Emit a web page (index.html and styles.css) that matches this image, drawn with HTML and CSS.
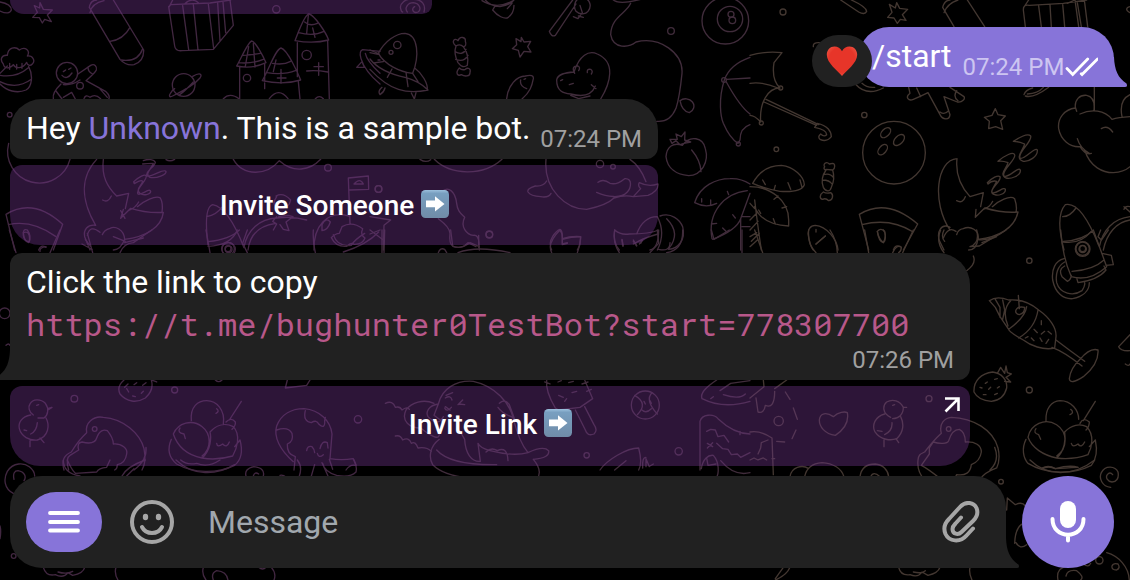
FILE: index.html
```html
<!DOCTYPE html>
<html lang="en">
<head>
<meta charset="utf-8">
<title>Chat</title>
<link rel="stylesheet" href="styles.css">
</head>
<body>
<svg class="wallpaper" viewBox="0 0 1130 580" aria-hidden="true">
  <g class="doodle left" transform="scale(.33333)">
    <path d="M0 6Q34 12 34 30Q28 46 0 33M120 8L130 28 157 30 142 45 154 65 134 58 127 69 118 53 98 52 112 37 103 17 119 24Z"/>
    <path d="M268 22Q272 0 290 0M268 22L360 178Q378 198 402 194Q432 184 431 150L340 0M270 38Q275 10 312 2M330 124Q370 119 390 82M362 180Q414 188 428 146"/>
    <path d="M506 20L524 138Q526 154 546 152L640 148L700 76L690 0M506 20L512 14 630 9 692 0M548 17L566 150M580 14L594 150M625 12L641 146M653 8L660 122M669 6L677 98M518 0L508 20M556 10Q575-8 595 8"/>
    <circle cx="829" cy="28" r="11"/><circle cx="29" cy="344" r="7"/>
    <path d="M10 192C-2 178 6 164 22 166C24 142 46 138 58 150C76 138 92 152 82 168C100 166 106 184 97 192C90 200 82 195 80 187C68 208 46 206 40 194C30 208 12 206 10 192M29 190V208M50 193V207M66 190V205M0 220L22 198M86 200C100 226 96 260 78 270C50 282 20 272 0 252M0 245Q50 270 94 238M0 226Q50 234 84 204"/>
    <circle cx="201" cy="219" r="32"/><path d="M186 226Q200 242 216 219M190 215l7-5M206 208l7-4M234 222L272 196C284 190 292 200 289 210Q286 218 258 242L318 275Q332 288 326 298M183 252Q156 278 160 296M168 273L186 297M190 254Q216 256 240 240M190 292L215 277 226 297M252 296Q256 282 270 292Q285 280 302 296M264 201Q264 216 278 222M296 262L322 292"/><circle cx="240" cy="257" r="10"/>
    <circle cx="551" cy="255" r="34"/><path d="M578 229C600 216 608 222 600 234Q580 258 518 288C506 294 508 286 510 282Q514 272 524 266M539 284Q552 276 580 246"/>
    <path d="M710 198C724 174 744 126 755 123C766 124 790 170 798 188Q755 208 710 198M728 166Q760 164 780 160M716 188Q755 192 790 178M746 140L736 199M760 130L765 201M719 200V297M794 190V244M794 249V266M787 242C806 210 826 148 843 144C862 148 894 220 902 240Q850 256 787 242M818 190Q850 196 872 184M801 218Q850 226 888 211M843 208V250M828 180L820 215M895 245L900 297M885 122C896 94 914 42 927 42C944 46 978 98 986 120Q940 132 885 122M914 66Q930 80 952 70M896 98Q940 110 972 94M925 46L920 100M938 84L945 112M892 128V230M983 123L988 297M920 213Q950 210 983 216M956 188V226M942 200H970M832 234H858"/>
    <circle cx="741" cy="234" r="11"/><circle cx="920" cy="165" r="14"/><path d="M670 296Q690 276 718 297M808 296Q836 260 864 296M946 296Q958 284 970 296"/>
    <path d="M1140 154L1088 149Q1076 154 1083 176Q1095 215 1140 252M1070 202L1086 185 1093 202ZM1096 160Q1100 182 1140 220M1140 180H1134"/>
    <path d="M26 430A94 94 0 1 0 210 478M290 478C230 542 254 620 287 676M310 478C304 530 322 560 350 588L386 580L376 626M308 600Q324 610 334 588M370 628L362 655 392 625Q440 640 490 637C484 684 436 710 374 718C372 686 344 678 330 685Q312 690 307 704M362 632L375 655M412 620C430 604 468 584 481 594Q490 610 486 637M388 630Q406 624 416 606M287 676C262 672 250 690 254 710L270 750M262 706Q270 672 300 697M246 732L276 748M374 718Q362 750 340 750M430 714L374 728"/>
    <path d="M401 545C418 530 434 522 438 527C446 538 404 568 414 582C424 588 448 562 452 574C452 584 430 588 420 580C406 567 424 558 428 544Q424 538 403 551ZM430 482C446 476 462 478 466 487C464 500 432 518 442 528C456 532 492 504 498 514C500 524 470 536 450 532C432 522 454 508 460 490Q440 490 428 492M498 479Q510 486 524 478"/>
    <path d="M18 643Q100 592 188 673L160 750M18 643L44 750M25 674Q96 658 168 710M70 706Q68 684 82 690Q96 710 86 728Q74 724 70 706M116 750Q122 732 138 742"/>
    <path d="M700 478C730 530 800 528 838 482C880 520 930 512 962 478"/><circle cx="984" cy="503" r="10"/>
    <path d="M638 614Q610 622 624 735M638 614C670 620 700 660 732 743M620 650Q650 644 665 622M624 739Q694 736 712 690M732 743C740 690 780 656 830 654Q880 648 920 660M744 750C750 700 780 676 828 670M828 588Q850 576 872 600Q868 626 836 626Q812 616 830 590M830 650L818 664 830 672 820 690M836 650L864 646 879 650 858 666 867 692 850 688 840 674"/>
    <circle cx="686" cy="748" r="20"/><circle cx="686" cy="748" r="10"/>
    <path d="M1050 670L1045 534L1105 528L1106 568L1049 570M1062 552Q1080 532 1090 552ZM1046 648C980 630 940 680 942 750M966 674Q978 650 991 666Q984 690 966 692ZM994 713Q1006 700 1018 700L1026 680Q1056 662 1088 686Q1080 704 1095 714Q1088 734 1062 733Q1054 726 1040 739Q1008 742 994 713"/><circle cx="1136" cy="567" r="10"/>
  </g>
  <g class="doodle middle" transform="translate(370) scale(.33333)">
    <path d="M162 36C168 14 156-2 130-2C106-6 88 12 92 26Q94 36 98 36M112 36C102 24 114 8 130 8C148 10 156 28 144 36C130 42 122 26 134 20M336 2Q380 30 430 2M346 0Q360 18 390 20Q424 14 432 0M368 30C384 50 402 56 412 54C428 44 432 30 432 16M368 30L374 20M426 10L412 26"/>
    <path d="M608 0L538 94Q544 112 556 106L618 12M634-8C612 -2 610 22 618 34C630 46 648 42 654 34C666 20 660 2 648-4M630 16L637 38 624 56 610 50M625 48L640 52"/>
    <path d="M728-2Q744 16 812-2M782 10C770 40 724 50 722 104C730 150 778 142 798 126C870 108 940 160 936 220C932 260 926 300 918 325Q900 368 860 364M930 302A25 22 0 1 1 958 338Q936 334 930 302"/>
    <circle cx="903" cy="93" r="10"/><circle cx="1066" cy="62" r="70"/><circle cx="1080" cy="57" r="38"/><circle cx="1083" cy="43" r="9"/><circle cx="1087" cy="61" r="10"/>
    <path d="M25 160C44 124 78 100 105 100C146 104 148 170 128 220C90 216 44 194 25 160M0 177Q30 216 108 233Q148 244 174 270C110 284 60 272 0 208M0 150L28 162M0 158L28 164M10 189L40 185M66 207L52 232M108 217L114 260M128 220L144 245M134 204C156 220 174 250 172 270M36 262Q22 274 30 284Q42 276 45 264M124 279L133 297 138 278"/><circle cx="82" cy="135" r="11"/><circle cx="63" cy="157" r="6"/>
    <path d="M258 138C242 124 254 112 264 122C270 106 288 112 286 124C290 134 286 140 280 140Q298 164 292 196Q278 207 264 188Q250 160 258 138ZM258 138Q270 130 280 140M255 155Q278 168 288 148M257 178Q282 188 294 166M268 204C254 220 264 230 274 224C284 230 300 230 300 218C304 204 292 202 286 208Q276 212 268 204Z"/>
    <path d="M454 112L462 126 482 124 473 140 483 156 462 154 450 171 445 151 427 146 440 134 438 116 453 125ZM410 296C414 256 440 228 466 228Q492 222 490 236C486 258 480 276 456 297M452 240Q448 258 470 266M462 238l5-2"/>
    <path d="M612 216C628 166 656 150 682 162C738 186 722 248 692 297M612 216C586 218 562 222 560 240C560 274 580 280 602 282Q660 298 676 258M664 254L678 266M614 220Q602 198 624 198Q632 202 626 212M652 218Q650 206 662 208Q670 214 664 222M572 242l6-3M598 254l12-4M602 286L626 296 660 288"/>
    <path d="M1140 172C1100 186 1074 208 1063 240C1044 300 1052 350 1060 370Q1080 416 1104 430L1110 420Q1110 384 1140 374M1069 238L1140 234M1069 246Q1110 320 1140 342"/><circle cx="1062" cy="240" r="7"/><circle cx="1105" cy="432" r="6"/>
    <path d="M888 470C890 440 910 426 937 436C960 404 1000 412 1006 446C1018 486 994 526 956 527C920 524 892 506 888 470M965 450Q992 482 993 515M900 418L922 418 918 402 934 410 945 396 944 420 962 426 942 430 930 434 918 422 906 430Z"/>
    <path d="M150 478Q168 490 182 479M193 478C240 526 340 530 396 478M528 478C520 570 590 628 650 628C690 620 720 606 732 594Q764 584 790 590L834 586Q866 574 864 552Q836 562 808 548Q802 558 812 566L790 590M828 545Q810 498 780 478M530 543Q520 560 496 558Q470 566 474 576Q482 588 512 590Q536 594 543 580M684 547Q700 535 720 550Q740 556 764 536C790 534 782 566 772 576C752 598 710 590 680 577"/>
    <circle cx="690" cy="492" r="11"/><circle cx="729" cy="500" r="7"/><circle cx="25" cy="567" r="10"/><circle cx="358" cy="703" r="10"/><path d="M215 575C236 556 256 576 260 610C262 632 272 640 284 652C270 680 290 704 310 706Q326 704 327 730L328 750M205 656Q240 682 240 700Q236 732 250 740C274 746 284 738 294 728L318 740M0 650L62 660 42 676 40 750M0 690L40 720"/>
    <path d="M545 750C530 720 560 692 570 688Q578 690 577 716Q602 708 632 710Q632 732 622 750M577 716V732L592 728M734 690Q728 728 748 750M734 690Q752 706 778 702Q840 702 866 690Q866 744 840 750M756 718L760 738M790 724L800 738M818 718L812 730M800 702C812 670 830 650 862 650Q888 700 862 750M870 648C904 636 930 660 938 680C948 720 924 746 896 748M890 656Q934 700 896 746M974 608C990 556 1040 536 1080 536Q1112 534 1140 552M974 608Q1008 626 1040 610M1026 716C1012 640 1060 580 1132 572M1028 718Q1100 690 1112 656L1140 580M995 596V606M1022 600V614M1072 574L1076 584M1024 672L1040 670M1058 684L1068 694M1088 644L1096 654M1112 656V750M1118 650H1140M1116 680H1140"/>
  </g>
  <g class="doodle right" transform="translate(750) scale(.33333)">
    <circle cx="99" cy="36" r="9"/><circle cx="343" cy="345" r="8"/><circle cx="79" cy="448" r="7"/><circle cx="92" cy="264" r="6"/><circle cx="34" cy="369" r="6"/>
    <path d="M272 0L326 36Q344 46 350 34Q348 20 304 0M440 8L449 25 473 28 457 44 468 61 451 58 442 70 432 54 413 52 426 37 418 13 436 24ZM578 22Q584 0 600 0M578 22L612 80M704 80L652 0M582 38Q592 10 624 0M820 30L826 80M820 30Q820 12 838 16L940 10 1010 0M820 24L836 0M866 18L874 80M900 14L904 80M938 12L944 80M952 10L975 0 986 80M982 8L994 80M1003 0L1013 80M1140 20Q1120 26 1140 38"/>
    <path d="M0 166Q50 152 96 158L72 188Q64 240 90 264C52 264 28 310 32 366Q14 346 0 346M0 250Q36 244 84 264M42 306L200 376M48 298L206 374M194 382L202 370C232 376 244 394 244 410Q230 428 210 418Q202 410 212 402Q222 412 230 404C230 392 214 386 194 382M190 140Q188 126 210 128M316 252Q350 290 400 264M336 250Q350 264 374 262"/>
    <path d="M476 262L480 280C464 292 476 304 490 298Q510 290 534 278L570 344C578 360 598 362 600 344L582 290 622 306C638 308 646 296 642 290L600 262M500 264L512 290M620 272Q608 290 624 302M570 336Q584 346 596 332M822 284Q826 270 848 264M826 288Q850 296 896 262M832 282Q864 280 880 262"/>
    <path d="M736 326L744 344 766 348 752 362 758 388 737 380 716 386 718 364 703 352 726 346ZM976 322C974 300 988 284 1010 286C1030 290 1034 310 1032 330M980 334L976 322M1033 262V330M990 342C1024 326 1064 330 1086 358Q1104 352 1140 350M1054 386Q1072 374 1088 396M976 324C944 328 922 354 926 386C932 420 960 442 990 440Q1006 466 1024 460M982 416Q990 444 1018 460M1004 450C1020 502 1060 518 1090 518Q1122 516 1140 500M1116 350Q1106 300 1140 284"/>
    <circle cx="432" cy="458" r="94"/><ellipse cx="407" cy="398" rx="18" ry="11" transform="rotate(-45 407 398)"/><ellipse cx="447" cy="420" rx="20" ry="12" transform="rotate(-45 447 420)"/><ellipse cx="398" cy="449" rx="18" ry="11" transform="rotate(-50 398 449)"/>
    <path d="M238 492C228 482 218 494 224 500C220 504 222 510 228 510Q210 536 220 562C228 576 240 576 244 562Q256 536 248 510C256 506 256 490 248 490ZM228 508L248 510M220 524Q240 518 250 532M218 540Q238 540 246 552M220 576C208 584 208 596 218 598C226 594 230 596 236 602C248 602 252 584 242 578Q230 582 220 576"/>
    <path d="M8 550C30 510 60 496 94 496C132 500 162 530 163 554Q154 578 90 574Q50 568 8 550M0 560C60 560 116 600 116 660V678C70 676 30 660 14 620M38 540l8 14M76 556l-4 14M114 548l8 20M150 540l6 22M84 588l-12 10M110 620l-14 4M70 656l6 16M26 630l6 10M14 600Q22 670 34 750M0 610L14 626M0 660L20 640M0 690L24 664M4 724L28 700"/>
    <path d="M621 476C560 480 544 606 600 690M621 476Q614 540 660 590L700 578L692 620M620 602Q638 612 646 590M678 628L676 652 704 624Q760 640 804 636C794 684 746 712 684 718C690 690 660 676 640 686Q624 688 620 704M727 620C744 604 780 584 794 596Q802 620 798 636M700 628Q720 622 728 604M600 682C574 668 560 696 568 722L582 750M580 714Q594 678 618 694M684 716Q680 750 656 750M740 710L696 728"/>
    <path d="M712 548C726 534 744 524 750 530C756 542 720 566 726 578C738 584 762 558 766 568C768 582 744 588 734 584C714 578 734 560 740 544Q726 540 714 552ZM744 484C764 466 790 454 794 464C800 478 752 512 762 528C776 536 804 498 811 510C814 528 780 538 768 534C746 522 770 506 774 488Q758 482 744 484ZM790 424C808 412 834 398 842 408C848 424 802 458 810 474C820 484 856 438 862 450C864 470 836 486 820 484C792 474 820 452 824 432Q806 424 790 424Z"/>
    <path d="M328 643Q410 592 503 672L460 750M328 643L356 750M336 674Q420 652 490 696M382 694Q392 682 404 694Q410 720 400 728Q386 716 382 694M430 750Q436 732 452 740M176 712C170 688 182 676 196 676C230 678 262 720 264 750M176 712Q180 738 190 750M198 688V696M198 732L226 708M946 614C922 640 926 690 942 750M946 614C980 606 1012 650 1046 736M938 650Q960 650 978 624M940 724Q1000 720 1028 692M1048 740C1058 690 1090 656 1140 650M1060 750C1070 700 1100 666 1140 660M1122 620L1140 636M1140 620Q1126 616 1122 628"/><circle cx="998" cy="746" r="20"/><circle cx="998" cy="746" r="9"/>
  </g>
  <g class="doodle left" transform="translate(0 230) scale(.33333)">
    <circle cx="14" cy="250" r="16"/><circle cx="223" cy="506" r="10"/><circle cx="524" cy="480" r="9"/><circle cx="1074" cy="568" r="11"/><path d="M18 346Q26 338 30 346M28 0L48 68M180 0L150 68M120 64Q118 52 138 50M262 10L278 68M256 28L272 50M340 20L376 34M360 68Q372 40 400 38L455 0M70 8Q92 0 88 34Q72 38 70 8M618 0L630 68M742 0L728 40 742 68M624 35Q690 28 718 0M940 0Q938 36 946 68M1000 14Q1012 52 1054 46Q1062 30 1094 10M1030 66Q1100 44 1136 6"/>
    <circle cx="684" cy="56" r="19"/><circle cx="684" cy="56" r="9"/><circle cx="284" cy="597" r="7"/>
    <path d="M372 450C356 464 354 480 360 492C380 516 410 520 436 504C454 488 460 470 454 450M374 472l10-10M402 464l8-6M428 466l10-8M386 486l-6-10M398 498l8 2M424 490l6-6M454 450L470 456M646 450Q656 460 666 450M862 450L856 474 920 466 930 450"/>
    <path d="M100 555C86 546 84 530 90 522C98 506 122 506 136 520C148 536 144 556 132 564L114 564M144 535L156 532 144 540M92 555C64 560 54 580 58 596C64 620 88 632 112 630C146 620 150 586 138 564M112 578Q110 604 92 612M72 600l8 2M90 632V650M120 624L132 638M110 526l6-2"/>
    <path d="M192 720C184 690 192 676 214 666Q234 632 260 608C254 580 280 556 310 562C370 566 420 610 432 656Q440 696 426 720M206 720Q196 684 210 676L236 660Q230 638 246 636C270 642 286 638 290 624C298 600 312 598 322 602Q340 624 340 642C366 640 384 656 380 672Q376 700 352 704Q352 716 344 720M438 652Q442 690 402 720"/>
    <path d="M574 572C570 530 594 512 620 512C650 512 676 540 670 582M520 612A56 56 0 1 1 606 678M520 612C534 654 566 676 606 684C634 660 634 620 630 606C650 584 676 578 700 590C724 616 710 656 698 678Q650 692 606 684M514 628C500 660 508 684 530 702C580 730 650 732 704 706C728 686 728 660 720 630L704 650M540 594Q530 608 552 612L556 626M650 640Q652 654 668 642Q680 656 688 636M648 550Q660 544 650 536M688 570L724 514M678 576Q694 560 706 576Q708 586 696 598"/>
    <path d="M880 695C840 660 820 620 830 588C844 552 876 536 912 536C960 540 992 574 996 612L990 686Q1024 692 1060 686L1068 706Q1050 702 1038 720M830 600Q864 588 876 610Q882 634 862 642Q860 672 886 680L882 720M916 542Q908 574 934 578Q950 568 956 582Q976 600 974 572L976 562M920 662Q922 646 936 650Q944 658 944 668M960 656Q966 630 982 638L984 654M952 670Q956 686 970 674M988 688L998 718"/>
  </g>
  <g class="doodle middle" transform="translate(370 230) scale(.33333)">
    <circle cx="358" cy="14" r="10"/><circle cx="826" cy="525" r="42"/><circle cx="650" cy="676" r="8"/><circle cx="926" cy="664" r="11"/>
    <path d="M0 12L30 0M36 0V68M44 0L42 68M242 0L248 48Q270 60 300 38L328 50M326 16V52M205 68Q210 52 224 58L230 68M264 68Q320 46 420 68M545 68Q530 40 570 0Q578 10 577 28Q602 20 632 20Q632 44 622 68M577 28V44L592 40M734 0Q728 38 748 68M840 68L866 40 862 0M756 30L758 48M790 30L800 46M818 30L808 42M790 42Q820 24 864 12M866 58Q900 66 900 38M890 68Q940 60 938 0M1024 0L1032 28 1078 0M1116 0V68"/>
    <path d="M205 522C216 476 258 450 310 454C376 468 420 520 430 566Q448 638 474 668Q520 646 536 662Q540 684 490 688M490 688Q520 724 500 748M474 668Q430 680 360 662Q330 654 324 640L331 694C304 696 286 670 284 628L268 600M205 522C176 526 166 546 174 560Q204 592 220 560M205 522L192 556 216 574M192 520C160 506 124 518 108 540C92 574 120 594 152 594Q210 640 208 610M46 520Q68 510 76 532Q90 528 96 540 112 528 118 538M76 618Q92 614 98 630 116 620 124 640 136 632 144 654Q170 650 184 664M208 628C178 650 176 684 188 704Q220 736 296 744M200 660Q240 706 380 704M228 496l20-8M226 504Q242 494 246 510M266 522l18 2M278 510l-14 14M224 534Q230 548 244 532M226 530L240 540M388 520Q404 504 418 524L434 568M384 532Q396 550 428 562M348 666Q364 650 382 662Q412 648 414 692"/>
    <path d="M530 450Q526 484 556 534L566 540 630 532 668 506 644 450M524 456L540 462M636 462L654 456M564 456l10-4M596 458l14-4M650 484L664 478M566 496l14 6M606 488l14-4M584 514l6-8M616 540L646 600Q652 620 672 612Q684 600 672 584L644 530M794 496Q836 520 802 554M846 488Q824 510 862 552M822 514l4 8M840 512l4 8M816 540Q828 552 844 536"/>
    <path d="M1040 450C1004 474 990 490 996 506Q1060 538 1140 514M1060 494Q1108 510 1126 492M1050 482L1082 460 1140 452M1022 506l8-6M990 720V574C996 552 1030 550 1044 566Q1090 610 1140 612M1110 604V614M1010 604L1022 598 1036 600 1044 620 1062 616 1076 636M1012 640L1028 650M1028 638L1012 654M1040 640L1058 656 1074 658 1084 674 1102 672 1112 682 1140 668M994 716C998 688 1014 674 1030 676C1048 696 1048 730 1038 746M1010 684L1014 706 1038 702M1052 692Q1092 740 1140 728M690 720C710 690 770 654 806 654Q818 700 806 720M734 720L768 692M828 710V686L838 710M828 682Q816 682 818 714M840 708L850 702"/>
  </g>
  <g class="doodle right" transform="translate(750 230) scale(.33333)">
    <circle cx="838" cy="92" r="8"/><circle cx="838" cy="480" r="9"/><circle cx="537" cy="506" r="9"/><circle cx="86" cy="573" r="14"/><circle cx="596" cy="597" r="7"/><circle cx="998" cy="57" r="22"/><circle cx="998" cy="57" r="11"/>
    <path d="M176 0Q172 42 198 68M198 42L226 18M262 68Q260 30 240 0M344 0L356 68M490 0L458 68M382 4Q386 34 400 38Q412 14 400 0M428 68Q440 42 454 52Q454 64 446 68M14 0L38 68M0 20L20 8M0 50L22 30M572 0Q556 34 582 68M680 0Q690 40 660 50M582 0Q572 20 584 34M682 28Q720 36 768 0M660 50L688 48 730 22M670 78Q680 100 650 122"/>
    <path d="M932 0Q938 84 964 140Q1018 156 1070 110L1030 0M940 36Q990 44 1024 4M966 124Q1030 120 1062 90M980 144L984 158Q1044 150 1068 120L1062 108M1056 70L1084 76 1090 104 1068 106M942 86C916 92 904 118 908 150C916 190 940 208 968 206C996 200 1018 184 1018 158M944 96C922 108 916 134 920 158C930 192 970 200 996 182Q1006 166 1004 158M944 108Q924 118 936 140L952 154Q962 150 964 136M1052 0L1044 20 1054 30 1075 0"/>
    <path d="M718 212Q740 196 776 210Q826 206 866 240C900 264 920 294 918 320L914 354C880 362 840 346 820 330Q776 306 776 298L750 260 736 232ZM736 208L750 232 750 262M758 210L764 240 758 268M782 212Q754 240 774 288M830 230Q826 262 776 298M864 240Q856 294 806 324M805 196L808 236M798 240Q802 228 824 232Q824 250 808 254Q794 250 798 240M918 330Q960 362 1004 394M906 352Q944 366 996 408M990 388Q1020 352 1044 360C1046 388 1030 416 1000 440Q960 466 958 446Q962 414 990 388M874 272V284M894 304L904 312M852 298L862 308M870 324L876 334M896 328L888 340M844 324l8 8M874 312l10-8M826 324l8-4"/>
    <path d="M672 486C670 452 694 430 728 426C756 430 772 450 770 474C764 498 746 512 724 514C696 512 680 502 672 486M742 430L752 412 764 430 768 408 772 428 784 432 768 442 782 456 764 454M706 460l6-4M734 448l8-2M690 472l6 2M716 478l6-6M742 474l6-4M700 494l8 0M734 494l8-4M1140 314L1106 350Q1112 364 1140 362M1126 402Q1136 410 1140 402"/>
    <path d="M888 572C886 536 904 514 930 512C964 512 986 540 986 568M834 622A56 56 0 1 1 920 678M834 622C846 654 880 676 920 684C944 662 948 628 944 606C964 584 990 580 1010 590C1034 614 1026 652 1014 674Q970 690 920 684M828 628C814 656 820 684 834 700C890 734 970 734 1024 706C1042 684 1042 658 1036 630L1018 650M858 596Q848 608 866 614L872 628M964 640Q968 654 984 642Q994 656 1004 636M960 554Q974 548 962 538M1000 572L1036 514M990 580Q1000 560 1018 576Q1018 590 1008 600M876 714Q896 704 916 716Q942 714 984 712"/>
    <path d="M504 690C506 672 512 672 524 666Q550 632 574 610C566 580 584 564 604 562C670 564 730 600 744 654Q752 688 740 714Q698 730 690 750M576 750Q534 716 514 706L538 672V654L550 636C568 642 592 642 596 632C604 606 618 598 628 598Q646 606 646 636C676 634 694 646 694 666Q690 694 664 704Q660 740 620 734L612 750M504 690Q500 724 524 750M734 652Q750 692 720 720M40 450L42 470 0 504M110 450L74 476M18 504L24 546Q42 552 46 526Q74 538 74 484M106 486L120 508M130 534L142 568M138 600L126 626M104 636L80 634M208 570C210 548 230 546 250 560C266 546 284 544 292 548C298 580 280 600 256 616C224 612 208 590 208 570M422 562C396 550 398 526 410 516C428 506 450 512 460 532C460 554 446 566 428 566M460 532L470 532M404 552C374 560 366 586 374 604C392 632 424 632 440 626C462 606 462 580 452 560M426 578Q428 602 404 614M382 602l14 2M402 630V650M438 626L446 638M428 526l6-2M0 606Q30 600 66 624L70 734M54 630L34 638 32 654 24 672M0 690L12 684 24 690 40 684 50 690M66 686H74M120 740C124 712 156 702 176 716M164 740C170 710 190 700 216 698C250 700 274 716 282 740M330 740C334 710 354 702 376 702C398 704 414 720 416 740M362 740Q370 722 390 740"/>
  </g>
  <g class="doodle left" transform="translate(0 460) scale(.33333)">
    <path d="M40 100C12 86 10 56 22 34C40 6 72 8 88 20Q104 32 104 48M42 58C38 40 44 32 54 32C74 36 80 50 72 62M190 0Q190 40 240 48M202 0Q214 28 226 40L290 36Q296 24 320 22L330 0M366 48Q380 20 436 0M380 48L402 26M528 0C580 50 650 46 704 14M542 0Q560 16 590 10Q624 24 660 0M738 48Q732 26 762 20Q796 24 790 48M760 48Q764 34 776 42M840 46Q850 44 858 52M892 0Q908 20 898 48M934 48L944 14M968 10Q974 36 1010 46Q1050 54 1068 36Q1072 18 1062 0M984 48L966 8M0 198Q4 214 0 236M130 322Q138 350 166 344Q190 356 204 338L218 346Q250 340 254 322M174 336Q200 344 218 334M348 322Q342 340 354 360M610 322Q604 342 618 360M640 360Q632 340 650 332Q680 334 684 360M776 322Q788 332 798 322M814 322Q830 340 822 360"/><circle cx="41" cy="288" r="7"/>
  </g>
  <g class="doodle right" transform="translate(750 460) scale(.33333)">
    <circle cx="753" cy="65" r="7"/><circle cx="1048" cy="301" r="11"/><path d="M840 0C890 50 970 50 1034 0M876 26Q896 16 916 26Q960 14 984 22M1082 82C1056 80 1046 54 1054 38C1066 14 1096 18 1104 36C1108 56 1098 66 1086 66C1072 64 1066 52 1072 44Q1080 34 1088 44M770 150L772 114 796 134Q816 124 826 138M794 250Q796 200 820 190M798 248Q810 270 830 254M446 322Q452 348 480 344Q504 354 516 336L534 346Q564 340 570 322M490 336Q516 342 526 332M660 322Q656 340 666 360M120 322Q110 346 76 360M100 322L76 356M924 360Q916 320 960 318M948 348Q952 328 980 332Q1004 350 992 360M1070 278C1106 288 1136 320 1138 360M1086 318Q1090 308 1104 312Q1112 324 1100 330Q1084 330 1086 318M1000 312Q1016 324 1022 310"/>
  </g>
</svg>

<main class="chat">
  <div class="keyboard keyboard-previous"></div>

  <div class="row outgoing-row">
    <span class="reaction">
      <svg width="32" height="32" viewBox="0 0 32 32">
        <defs><radialGradient id="heart" cx=".5" cy=".45" r=".65"><stop offset=".65" stop-color="#e73529"/><stop offset="1" stop-color="#f05b48"/></radialGradient></defs>
        <path d="M16 31C12 26 .8 18 .8 9.700C.8 4.700 4.300 1.400 8.500 1.400c3.300 0 6.100 1.900 7.500 4.800c1.400-2.900 4.200-4.800 7.500-4.800c4.200 0 7.700 3.300 7.700 8.300C31.200 18 20 26 16 31Z" fill="url(#heart)"/>
      </svg>
    </span>
    <div class="bubble outgoing">
      <span class="text command">/start</span>
      <span class="time">07:24 PM</span>
      <svg class="checks" width="34" height="20" viewBox="0 0 34 20"><path d="M2 11.500L7.700 17.500L22.700 2M16.200 16.800L17 17.500L32.500 2"/></svg>
      <svg class="tail" width="30" height="30" viewBox="0 0 30 30"><path d="M0 0H16C16.500 13 20 21 28.500 26.500Q30 30 27 30H0Z"/></svg>
    </div>
  </div>

  <div class="bubble greeting">
    <span class="text">Hey <a class="mention">Unknown</a>. This is a sample bot.</span>
    <span class="time">07:24 PM</span>
  </div>
  <div class="keyboard keyboard-someone">
    <span class="label">Invite Someone</span>
    <svg class="emoji" width="28" height="28" viewBox="0 0 28 28"><defs><linearGradient id="tile" x2="0" y2="1"><stop stop-color="#9cc0dd"/><stop offset=".12" stop-color="#789fc0"/><stop offset="1" stop-color="#708ca8"/></linearGradient></defs><rect width="28" height="28" rx="4.500" fill="url(#tile)"/><path d="M5 10.500H14V6.300L23.500 14L14 21.500V17.300H5Z" fill="#fff"/></svg>
  </div>

  <div class="bubble link-bubble">
    <span class="text">Click the link to copy</span>
    <code class="link">https://t.me/bughunter0TestBot?start=778307700</code>
    <span class="time">07:26 PM</span>
    <svg class="tail tail-left" width="30" height="30" viewBox="0 0 30 30"><path d="M0 0H16C16.500 13 20 21 28.500 26.500Q30 30 27 30H0Z"/></svg>
  </div>
  <div class="keyboard keyboard-link">
    <span class="label">Invite Link</span>
    <svg class="emoji" width="28" height="28" viewBox="0 0 28 28"><rect width="28" height="28" rx="4.500" fill="url(#tile)"/><path d="M5 10.500H14V6.300L23.500 14L14 21.500V17.300H5Z" fill="#fff"/></svg>
    <svg class="external" width="16" height="16" viewBox="0 0 16 16"><path d="M1 1.500H14.500V14M14 2L1.500 14.500"/></svg>
  </div>

  <footer class="composer">
    <div class="input">
      <span class="menu"><svg width="32" height="22" viewBox="0 0 32 22"><path d="M2 2H30M2 11H30M2 19.500H30"/></svg></span>
      <svg class="smile" width="44" height="44" viewBox="0 0 44 44"><circle cx="22" cy="22" r="20"/><path d="M12 27C16 35 28 35 32 27"/><ellipse class="eye" cx="15.500" cy="17" rx="2.700" ry="3.200"/><ellipse class="eye" cx="28.500" cy="17" rx="2.700" ry="3.200"/></svg>
      <span class="placeholder">Message</span>
      <svg class="clip" width="38" height="42" viewBox="0 0 38 42"><path d="M31 27.500L24.500 34.500C18 42 7 40.500 3.500 33C1 27 3 22 7 18L18 6C24 -.5 32 1.500 34.500 7C37 13 34 17 31 20L19.500 31C16 34.500 10.500 33 10.500 28C10.500 25.500 12 24 13.500 22.500L19 16.500"/></svg>
      <svg class="tail" width="30" height="30" viewBox="0 0 30 30"><path d="M0 0H16C16.500 13 20 21 28.500 26.500Q30 30 27 30H0Z"/></svg>
    </div>
    <span class="mic"><svg width="36" height="42" viewBox="0 0 36 42"><rect x="10" y="0" width="16" height="27" rx="8" fill="#fff"/><path d="M2.500 18C2.500 39 33.500 39 33.500 18M18 34V39.500"/></svg></span>
  </footer>
</main>
</body>
</html>
```
FILE: styles.css
```css
* { box-sizing: border-box; }
body {
  margin: 0;
  width: 1130px;
  height: 580px;
  overflow: hidden;
  background: #000;
  color: #fff;
  font-family: Roboto, "Noto Sans", sans-serif;
}
svg { display: block; flex: none; }
.wallpaper { position: absolute; left: 0; top: 0; width: 1130px; height: 580px; }
.doodle { fill: none; stroke-width: 4; stroke-linejoin: round; stroke-linecap: round; }
.doodle.left { stroke: #412740; }
.doodle.middle { stroke: #402c3b; }
.doodle.right { stroke: #433731; }

.chat {
  position: relative;
  height: 580px;
  padding-left: 10px;
  display: flex;
  flex-direction: column;
  align-items: flex-start;
}
.bubble {
  position: relative;
  display: flex;
  background: #212121;
}
.text { font-size: 32px; line-height: 38px; letter-spacing: -.02px; white-space: nowrap; }
.time { font-size: 24px; line-height: 28px; color: #a0a0a0; white-space: nowrap; }
.mention { color: #8774d9; }

.keyboard {
  position: relative;
  display: flex;
  align-items: center;
  justify-content: center;
  gap: 7px;
  height: 80px;
  background: rgba(113, 53, 140, .4);
  border-radius: 12px 12px 30px 30px;
}
.keyboard-previous { width: 422px; height: 14px; border-radius: 0 0 14px 20px; }
.keyboard-someone { width: 648px; margin-top: 6px; padding: 1px 0 0 1px; }
.keyboard-link { width: 960px; margin-top: 6px; padding: 0 0 3px 1px; }
.label { font-size: 28px; font-weight: 500; line-height: 32px; }
.emoji { margin-top: -3px; }
.external { position: absolute; right: 10px; top: 11px; fill: none; stroke: #fff; stroke-width: 2.6; }

.row { display: flex; }
.outgoing-row { align-self: flex-end; margin: 13px 16px 0 0; }
.reaction {
  z-index: 1;
  width: 60px;
  height: 52px;
  margin: 8px -13px 0 0;
  display: flex;
  align-items: center;
  justify-content: center;
  border-radius: 26px;
  background: #212121;
}
.outgoing {
  width: 255px;
  height: 60px;
  padding: 10px 0 0 13px;
  border-radius: 30px 32px 0 30px;
  background: #8774d9;
}
.outgoing .time { margin: 16px 0 0 11px; color: #cdc5f1; }
.checks { margin: 20px 0 0 1px; fill: none; stroke: #fff; stroke-width: 2.8; stroke-linecap: round; }
.tail { position: absolute; right: -14px; bottom: 0; fill: #212121; }
.outgoing .tail { fill: #8774d9; }
.tail-left { right: auto; left: -14px; transform: scaleX(-1); }

.greeting {
  width: 648px;
  height: 60px;
  margin-top: 12px;
  padding: 10px 16px 0;
  justify-content: space-between;
  border-radius: 32px 32px 12px 12px;
}
.greeting .time { margin-top: 16px; }
.link-bubble {
  width: 960px;
  height: 127px;
  margin-top: 8px;
  padding: 10px 16px 0;
  flex-direction: column;
  border-radius: 12px 32px 12px 0;
}
.link {
  margin-top: 4px;
  font: 32px/38px "Roboto Mono", "Liberation Mono", monospace;
  color: #b8588a;
}
.link-bubble .time { align-self: flex-end; margin-top: 3px; }

.composer { display: flex; gap: 16px; margin-top: 10px; }
.input {
  position: relative;
  display: flex;
  align-items: center;
  width: 996px;
  height: 92px;
  padding: 0 26px 0 16px;
  border-radius: 32px 32px 0 32px;
  background: #212121;
}
.menu {
  width: 76px;
  height: 60px;
  display: flex;
  align-items: center;
  justify-content: center;
  border-radius: 30px;
  background: #8774d9;
}
.menu path { stroke: #fff; stroke-width: 3.8; stroke-linecap: round; }
.smile { margin-left: 28px; fill: none; stroke: #a6a6a6; stroke-width: 4; stroke-linecap: round; }
.smile .eye { fill: #a6a6a6; stroke: none; }
.placeholder { flex: 1; margin-left: 34px; font-size: 32px; line-height: 38px; color: #a1a8ae; }
.clip { fill: none; stroke: #a6a6a6; stroke-width: 4; stroke-linecap: round; stroke-linejoin: round; }
.mic {
  width: 92px;
  height: 92px;
  display: flex;
  align-items: center;
  justify-content: center;
  border-radius: 50%;
  background: #8774d9;
}
.mic path { fill: none; stroke: #fff; stroke-width: 4; stroke-linecap: round; }
```
